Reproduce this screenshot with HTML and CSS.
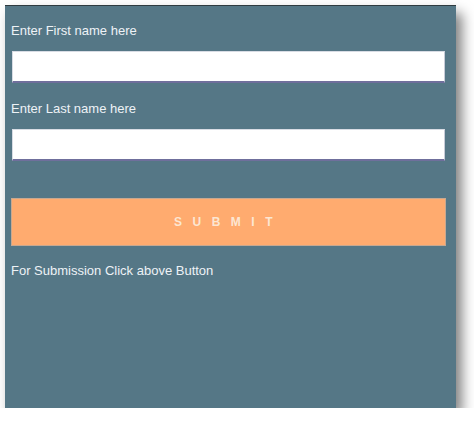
FILE: index.html
```html
<!DOCTYPE html>
<html>
<head>
<meta charset="utf-8">
<link rel="stylesheet" href="styles.css">
</head>
<body>
<div class="panel">
  <label class="label" for="fn">Enter First name here</label>
  <input class="field" id="fn" type="text">
  <label class="label second" for="ln">Enter Last name here</label>
  <input class="field" id="ln" type="text">
  <button class="submit" type="button">SUBMIT</button>
  <p class="note">For Submission Click above Button</p>
</div>
</body>
</html>
```
FILE: styles.css
```css
html, body {
  margin: 0;
  padding: 0;
  background: #ffffff;
}
body {
  padding: 5px 0 0 5px;
  font-family: "Liberation Sans", Arial, sans-serif;
}
.panel {
  box-sizing: border-box;
  width: 451px;
  height: 403px;
  background: #557786;
  border-top: 1px solid #2f3b40;
  box-shadow: 6px 8px 12px rgba(0, 0, 0, 0.5);
  padding: 17px 0 0 6px;
  display: flex;
  flex-direction: column;
  align-items: flex-start;
}
.label {
  display: block;
  font-size: 13px;
  line-height: 15px;
  color: #eef2f6;
}
.label.second {
  margin-top: 18px;
}
.field {
  box-sizing: border-box;
  margin: 13px 0 0 1px;
  width: 433px;
  height: 32px;
  background: #ffffff;
  border: 1px solid #d8dce4;
  border-bottom: 2px solid #6f6f9c;
  border-right: 1px solid #c8ccd8;
  padding: 0 6px;
  outline: none;
}
.submit {
  box-sizing: border-box;
  margin-top: 37px;
  width: 435px;
  height: 48px;
  background: #ffab6f;
  border: 1px solid #c8a890;
  color: #fce6d2;
  font-family: "Liberation Sans", Arial, sans-serif;
  font-size: 12px;
  font-weight: bold;
  letter-spacing: 10.5px;
  padding: 0 0 0 0;
  cursor: pointer;
}
.note {
  margin: 17px 0 0 0;
  font-size: 13px;
  line-height: 15px;
  color: #eef2f6;
}
```
